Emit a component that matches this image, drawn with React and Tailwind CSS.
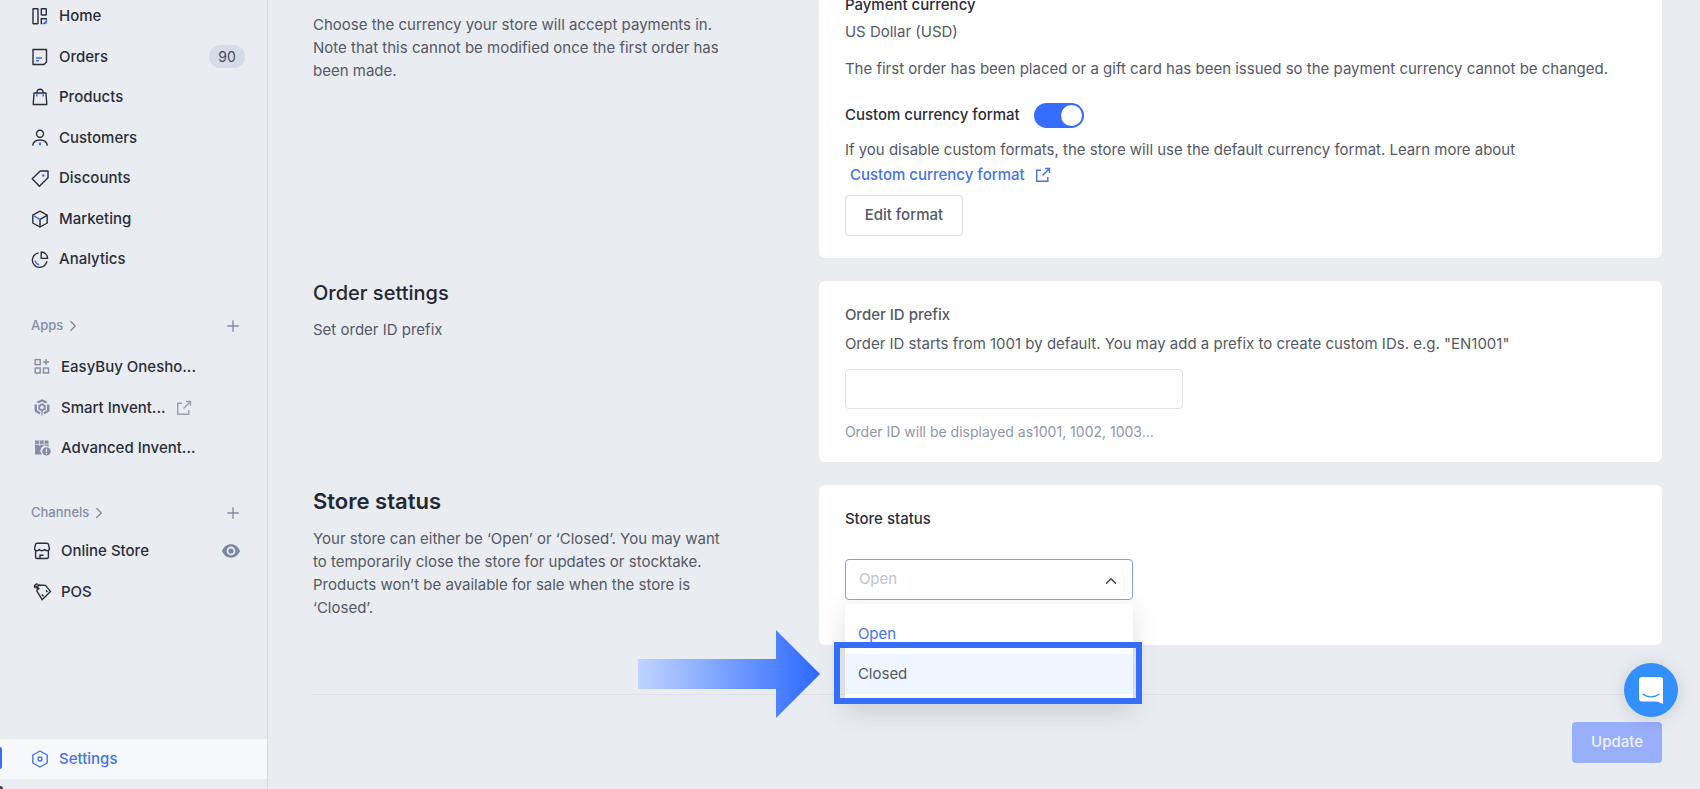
import React, { useState } from 'react';
import { ChevronRight, ChevronUp, Plus } from 'lucide-react';

const Icon = ({ children, className = 'text-[#2a2e3a]' }) => (
  <svg
    width="18"
    height="18"
    viewBox="0 0 18 18"
    fill="none"
    stroke="currentColor"
    strokeWidth="1.4"
    className={`shrink-0 overflow-visible ${className}`}
    aria-hidden="true"
  >
    {children}
  </svg>
);

const HomeIcon = () => (
  <Icon>
    <rect x="2" y="1.7" width="5" height="15" rx="0.4" />
    <rect x="10.3" y="1.7" width="5" height="6.3" rx="0.4" />
    <path d="M10.3 17.2V11.7h5.7" />
    <path d="M15.4 12v2.2l-2.3 2.3h-1.6" stroke="#3b6ef6" />
    <path d="M15.4 14.2v2.3h-2.3z" stroke="#3b6ef6" strokeWidth="0.8" />
  </Icon>
);

const OrdersIcon = () => (
  <Icon>
    <path d="M2 1.5h13.500v12.500l-2.500 2.500H2z" strokeLinejoin="round" />
    <path d="M5 10h6M5 12.800h3" stroke="#3b6ef6" />
  </Icon>
);

const ProductsIcon = () => (
  <Icon>
    <path d="M3 5h12l.8 11.500H2.200z" strokeLinejoin="round" />
    <path d="M5.800 5C5.800 2.500 7 1.200 9 1.200s3.200 1.300 3.200 3.800" />
    <path d="M5.800 5.600v2.800M12.200 5.600v2.800" stroke="#3b6ef6" />
  </Icon>
);

const CustomersIcon = () => (
  <Icon>
    <circle cx="9" cy="4.700" r="3.500" />
    <path d="M1.600 16.600c.6-3.600 3.400-5.600 7.400-5.600s6.800 2 7.400 5.600" />
    <path d="M9 13.600v2.600" stroke="#3b6ef6" strokeWidth="2" />
  </Icon>
);

const DiscountsIcon = () => (
  <Icon>
    <path d="M17 1v6.700L8.400 16.200 1.200 8.700 9.200 1z" strokeLinejoin="round" />
    <circle cx="12.300" cy="5.500" r="1.200" fill="#3b6ef6" stroke="none" />
  </Icon>
);

const MarketingIcon = () => (
  <Icon>
    <path d="M9 1.200l7.200 4v7.800L9 17l-7.200-4V5.200z" strokeLinejoin="round" />
    <path d="M9 17V9.400l7.200-4" />
    <path d="M2.600 5.800L9 9.400" stroke="#3b6ef6" />
  </Icon>
);

const AnalyticsIcon = () => (
  <Icon>
    <path d="M7.600 1.900A7.300 7.300 0 1 0 15.900 10.200" />
    <path d="M10.200 1v6.400h6.400a6.400 6.400 0 0 0-6.400-6.400z" strokeLinejoin="round" />
    <path d="M4.200 9.600c.3 2 1.800 3.600 4 4" stroke="#3b6ef6" />
  </Icon>
);

const OneShopIcon = () => (
  <Icon className="text-[#858ca3]">
    <rect x="2.200" y="1.600" width="5" height="5" />
    <rect x="2.200" y="10" width="5" height="5" />
    <rect x="10.500" y="10" width="5" height="5" />
    <path d="M13 1v6M10 4h6" />
  </Icon>
);

const SmartInventoryIcon = () => (
  <Icon className="text-[#858ca3]">
    <path d="M4.300 3.400L9 1.400l4.700 2" strokeWidth="2.200" />
    <path d="M2.800 5.500v6.200l4.200 2.900M15.200 5.500v6.200L11 14.600" strokeWidth="2.400" />
    <path d="M9 4.200l3.700 2.100v4.200L9 12.600l-3.700-2.100V6.300z" fill="currentColor" stroke="none" />
    <circle cx="9" cy="8.400" r="1.800" fill="#e9ecf1" stroke="none" />
    <path d="M9 12v4.600" strokeWidth="1.200" />
  </Icon>
);

const AdvancedInventoryIcon = () => (
  <Icon className="text-[#858ca3]">
    <path d="M2 .5h13.500v6.400a4.800 4.800 0 0 0-6.300 7.600H2z" fill="currentColor" stroke="none" />
    <path d="M2 4.300h4M11.500 4.300h4" stroke="#e9ecf1" strokeWidth="0.800" />
    <path d="M6.400.5v4.800l2.400-1.300 2.400 1.300V.5" stroke="#e9ecf1" strokeWidth="0.900" />
    <circle cx="13.500" cy="11.400" r="4.200" fill="currentColor" stroke="none" />
    <path d="M13.500 8.800v3.400M13.500 13v1.200" stroke="#e9ecf1" strokeWidth="1.200" />
  </Icon>
);

const OnlineStoreIcon = () => (
  <Icon>
    <path d="M4.200 1.200h9.600c.9 0 1.500.5 1.700 1.300l.9 4c0 1.300-.9 2.200-2.300 2.200-1.100 0-1.900-.5-2.400-1.300-.5.800-1.500 1.300-2.700 1.300s-2.200-.5-2.700-1.300c-.5.800-1.300 1.300-2.400 1.300-1.400 0-2.300-.9-2.300-2.200l.9-4c.2-.8.8-1.300 1.700-1.300z" strokeLinejoin="round" />
    <path d="M2.600 8.700v6.300c0 1 .6 1.500 1.500 1.500h9.800c.9 0 1.500-.5 1.500-1.500V8.700" />
    <path d="M7 16.400v-3.200h3.500" />
  </Icon>
);

const PosIcon = () => (
  <Icon>
    <path d="M5.200 2l7.300.4 5 6.200-8.400 8.100-5.200-8.600z" strokeLinejoin="round" />
    <path d="M2.600 5.200A2.200 2.200 0 1 1 4.900 1.400" />
    <path d="M2.300 2.900l4 3.300" strokeWidth="1.800" />
    <path d="M8.700 11.400l1.800 1.900M13 7.300l1.400 1.700" />
  </Icon>
);

const SettingsIcon = () => (
  <Icon className="text-[#4573e6]">
    <path d="M9 1l7.200 4v8L9 17l-7.200-4V5z" strokeLinejoin="round" />
    <circle cx="9" cy="9" r="2" />
  </Icon>
);

const ExternalIcon = ({ className = '' }) => (
  <svg width="16" height="16" viewBox="0 0 16 16" fill="none" stroke="currentColor" strokeWidth="1.4" className={`shrink-0 ${className}`} aria-hidden="true">
    <path d="M6 3.200H1.700v11.100h11.100V10" />
    <path d="M7.500 8.500l6.600-6.600M10 1.500h4.500V6" />
  </svg>
);

const EyeIcon = () => (
  <svg width="18" height="14" viewBox="0 0 18 14" className="text-[#7d86a0]" aria-hidden="true">
    <path fillRule="evenodd" fill="currentColor" d="M9 .3c4 0 7.200 2.500 9 6.700-1.800 4.200-5 6.700-9 6.700S1.800 11.200 0 7C1.800 2.800 5 .3 9 .3zM9 2.600a4.400 4.400 0 1 0 0 8.800 4.400 4.400 0 0 0 0-8.800z" />
    <circle cx="9" cy="7" r="2.600" fill="currentColor" />
  </svg>
);

const navItems = [
  { label: 'Home', icon: HomeIcon },
  { label: 'Orders', icon: OrdersIcon, badge: 90 },
  { label: 'Products', icon: ProductsIcon },
  { label: 'Customers', icon: CustomersIcon },
  { label: 'Discounts', icon: DiscountsIcon },
  { label: 'Marketing', icon: MarketingIcon },
  { label: 'Analytics', icon: AnalyticsIcon }
];

const appItems = [
  { label: 'EasyBuy Onesho...', icon: OneShopIcon },
  { label: 'Smart Invent...', icon: SmartInventoryIcon, external: true },
  { label: 'Advanced Invent...', icon: AdvancedInventoryIcon }
];

const channelItems = [
  { label: 'Online Store', icon: OnlineStoreIcon, visible: true },
  { label: 'POS', icon: PosIcon }
];

const NavLink = ({ item, className }) => {
  const ItemIcon = item.icon;
  return (
    <a href="#" className={`flex items-center gap-[10px] pr-[22px] ${className}`}>
      <ItemIcon />
      <span>{item.label}</span>
      {item.external && <ExternalIcon className="text-[#9a9fb2]" />}
      {item.badge && (
        <span className="ml-auto flex h-[23px] w-9 items-center justify-center rounded-full bg-[#d7dbe8] text-sm font-normal text-[#474c5c]">
          {item.badge}
        </span>
      )}
      {item.visible && (
        <span className="ml-auto pr-[5px]"><EyeIcon /></span>
      )}
    </a>
  );
};

const NavHeader = ({ label }) => (
  <div className="flex h-9 items-center justify-between pl-[31px] pr-[25px] text-[#858ca3]">
    <a href="#" className="flex items-center gap-px text-[13px] font-medium">
      {label}
      <ChevronRight size={18} strokeWidth={1.8} />
    </a>
    <button type="button" aria-label={`Add ${label}`}>
      <Plus size={18} strokeWidth={1.8} />
    </button>
  </div>
);

const Sidebar = () => (
  <aside className="relative flex w-[268px] shrink-0 flex-col border-r border-[#d6d9ea] text-[15px] font-medium text-[#2a2e3a]">
    <nav className="-mt-1 grid h-[284px] shrink-0 auto-rows-fr">
      {navItems.map(item => (
        <NavLink key={item.label} item={item} className="pl-[31px]" />
      ))}
    </nav>

    <div className="mt-7">
      <NavHeader label="Apps" />
      <div className="mt-[3px] grid h-[122px] auto-rows-fr">
        {appItems.map(item => (
          <NavLink key={item.label} item={item} className="pl-[33px]" />
        ))}
      </div>
    </div>

    <div className="mt-[26px]">
      <NavHeader label="Channels" />
      <div className="grid h-[81px] auto-rows-fr">
        {channelItems.map(item => (
          <NavLink key={item.label} item={item} className="pl-[33px]" />
        ))}
      </div>
    </div>

    <div className="relative mt-auto mb-[10px] bg-[#f7f8fc] text-[#4573e6]">
      <NavLink item={{ label: 'Settings', icon: SettingsIcon }} className="h-10 pl-[31px]" />
      <span className="absolute top-2 left-0 h-[22px] w-[2px] rounded-r bg-[#356dff]" />
    </div>
    <span className="absolute bottom-0 left-0 size-[3px] rounded-tr-full bg-[#453f3f]" />
  </aside>
);

const Section = ({ intro, children, cardClass }) => (
  <section className="grid grid-cols-8">
    <div className="col-span-3 pr-[88px]">{intro}</div>
    <div className={`col-span-5 rounded-md bg-white px-[26px] pt-[22px] ${cardClass}`}>{children}</div>
  </section>
);

const StatusArrow = () => (
  <svg width="182" height="88" viewBox="0 0 182 88" className="pointer-events-none absolute top-[71px] -left-[207px] max-w-none" aria-hidden="true">
    <defs>
      <linearGradient id="arrowFill" x1="0" x2="1" y1="0" y2="0">
        <stop offset="0" stopColor="#bfd5ff" />
        <stop offset="1" stopColor="#2c68ff" />
      </linearGradient>
    </defs>
    <path d="M0 29h138V0l44 44-44 44V59H0z" fill="url(#arrowFill)" />
  </svg>
);

const App = () => {
  const [customFormat, setCustomFormat] = useState(true);
  const [prefix, setPrefix] = useState('');
  const [status, setStatus] = useState('Open');

  return (
    <div className="flex h-screen min-h-[760px] overflow-hidden bg-[#e9ecf1] font-['Inter',sans-serif] text-[15px] text-[#555966]">
      <Sidebar />

      <main className="min-w-0 flex-1 pr-[38px] pl-[45px]">
        <div className="-mt-[29px] flex flex-col gap-[23px]">
          <Section
            cardClass="pb-[22px]"
            intro={
              <p className="pt-[42px] leading-[23px]">
                Choose the currency your store will accept payments in. Note that this cannot be modified once the first order has been made.
              </p>
            }
          >
            <h3 className="leading-6 font-medium text-[#2a2e3a]">Payment currency</h3>
            <p className="mt-[3px] leading-6">US Dollar (USD)</p>
            <p className="mt-[13px] leading-6">
              The first order has been placed or a gift card has been issued so the payment currency cannot be changed.
            </p>
            <label className="mt-[22px] flex h-[25px] items-center gap-[14px] font-medium text-[#2a2e3a]">
              Custom currency format
              <input
                type="checkbox"
                checked={customFormat}
                onChange={e => setCustomFormat(e.target.checked)}
                className="h-[25px] w-[50px] appearance-none rounded-full bg-[#c3c8d6] before:mt-[2px] before:ml-[2px] before:block before:size-[21px] before:rounded-full before:bg-white checked:bg-[#356dff] checked:before:ml-[27px]"
              />
            </label>
            <p className="mt-[10px] leading-6">
              If you disable custom formats, the store will use the default currency format. Learn more about
            </p>
            <a href="#" className="mt-px ml-[5px] flex items-center gap-[10px] leading-6 font-medium text-[#4573e6]">
              Custom currency format
              <ExternalIcon />
            </a>
            <button type="button" className="mt-2 h-[41px] w-[118px] rounded border border-[#dcdfe8] font-medium">
              Edit format
            </button>
          </Section>

          <Section
            cardClass="pb-5"
            intro={
              <>
                <h2 className="text-xl leading-6 font-medium text-[#242833]">Order settings</h2>
                <p className="mt-[13px] leading-[23px]">Set order ID prefix</p>
              </>
            }
          >
            <label htmlFor="prefix" className="block leading-6 font-medium">Order ID prefix</label>
            <p className="mt-[5px] leading-6">
              Order ID starts from 1001 by default. You may add a prefix to create custom IDs. e.g. "EN1001"
            </p>
            <input
              id="prefix"
              type="text"
              value={prefix}
              onChange={e => setPrefix(e.target.value)}
              className="mt-[13px] block h-10 w-[338px] rounded border border-[#e0e3ea] px-3 outline-none"
            />
            <p className="mt-[13px] text-sm leading-5 text-[#9197a8]">Order ID will be displayed as1001, 1002, 1003...</p>
          </Section>

          <Section
            cardClass="pb-[45px]"
            intro={
              <>
                <h2 className="pt-1 text-[22px] leading-6 font-semibold text-[#242833]">Store status</h2>
                <p className="mt-[14px] leading-[23px]">
                  Your store can either be ‘Open’ or ‘Closed’. You may want to temporarily close the store for updates or stocktake. Products won’t be available for sale when the store is ‘Closed’.
                </p>
              </>
            }
          >
            <label htmlFor="status" className="block leading-6 font-medium text-[#2a2e3a]">Store status</label>
            <div className="relative z-10 mt-7 w-72">
              <select
                id="status"
                value={status}
                onChange={e => setStatus(e.target.value)}
                className="relative z-10 block h-[41px] w-full appearance-none rounded border border-[#7f9fe8] bg-white px-[13px] text-[#c0c3cc] outline-none"
              >
                <option>Open</option>
                <option>Closed</option>
              </select>
              <ChevronUp size={18} strokeWidth={2} className="pointer-events-none absolute top-[13px] right-[13px] z-10 text-[#3e4350]" />

              <div className="absolute top-[45px] left-0 w-full rounded bg-white py-[10px] shadow-[0_8px_26px_rgba(60,60,70,0.17)]">
                <button type="button" onClick={() => setStatus('Open')} className="block h-10 w-full px-[13px] text-left text-[#4573e6]">
                  Open
                </button>
                <button type="button" onClick={() => setStatus('Closed')} className="block h-10 w-full bg-[#eff6ff] px-[13px] text-left">
                  Closed
                </button>
              </div>
              <span className="pointer-events-none absolute top-[83px] -right-[9px] -left-[11px] h-[62px] border-6 border-[#356dff]" />
              <StatusArrow />
            </div>
          </Section>
        </div>

        <div className="mt-[49px] flex justify-end border-t border-[#dde0e6] pt-[27px]">
          <button type="button" className="h-[41px] w-[90px] rounded bg-[#98affb] font-medium text-[#eef2ff]">
            Update
          </button>
        </div>
      </main>

      <button
        type="button"
        aria-label="Open chat"
        className="fixed right-[22px] bottom-[72px] z-20 flex size-[54px] items-center justify-center rounded-full bg-[#338ffc] shadow-[0_2px_18px_rgba(0,0,0,0.14)]"
      >
        <svg width="26" height="28" viewBox="0 0 26 28" aria-hidden="true">
          <path d="M4 1h18a3 3 0 0 1 3 3v24l-6-2.600H4a3 3 0 0 1-3-3V4a3 3 0 0 1 3-3z" fill="#fff" />
          <path d="M5 18.200c4.600 3.500 11.400 3.500 16 0" fill="none" stroke="#338ffc" strokeWidth="1.400" strokeLinecap="round" />
        </svg>
      </button>
    </div>
  );
};

export default App;
